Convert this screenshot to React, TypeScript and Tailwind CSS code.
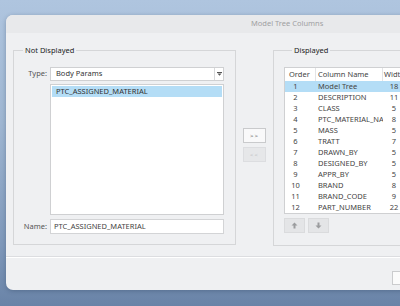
const rows: [string, string, string][] = [
  ["1", "Model Tree", "18"],
  ["2", "DESCRIPTION", "11"],
  ["3", "CLASS", "5"],
  ["4", "PTC_MATERIAL_NAME", "8"],
  ["5", "MASS", "5"],
  ["6", "TRATT", "7"],
  ["7", "DRAWN_BY", "5"],
  ["8", "DESIGNED_BY", "5"],
  ["9", "APPR_BY", "5"],
  ["10", "BRAND", "8"],
  ["11", "BRAND_CODE", "9"],
  ["12", "PART_NUMBER", "22"],
];

function ArrowUp() {
  return (
    <svg width="7" height="7" viewBox="0 0 7 7">
      <path d="M3.5 0.5 L6.5 3.5 L4.5 3.5 L4.5 6.5 L2.5 6.5 L2.5 3.5 L0.5 3.5 Z" fill="#9b9c9e" />
    </svg>
  );
}

function ArrowDown() {
  return (
    <svg width="7" height="7" viewBox="0 0 7 7">
      <path d="M3.5 6.5 L6.5 3.5 L4.5 3.5 L4.5 0.5 L2.5 0.5 L2.5 3.5 L0.5 3.5 Z" fill="#9b9c9e" />
    </svg>
  );
}

export default function App() {
  return (
    <div
      className="relative w-[400px] h-[306px] overflow-hidden bg-[linear-gradient(180deg,#afc5df_0%,#9fb6d2_40%,#7f98ba_80%,#6983a7_100%)]"
      style={{ fontFamily: '"Noto Sans", "Open Sans", Arial, sans-serif' }}
    >
      <div className="absolute left-[6px] top-[15px] w-[430px] h-[275px] rounded-l-[7px] bg-[#eff0f2] flex flex-col overflow-hidden shadow-[0_1px_4px_rgba(40,60,90,0.35)]">
        {/* title bar */}
        <div className="h-[18px] bg-[#e8e9eb] flex items-center pl-[245px] text-[7.5px] text-[#9fa0a2] leading-none">
          Model Tree Columns
        </div>

        {/* body */}
        <div className="flex pl-[7px] pt-[11px] pb-[10px] text-[7.5px] leading-none">
          {/* Not displayed */}
          <fieldset className="w-[223px] h-[201px] border border-[#d5d6d8] pr-[11px] pb-[10px]">
            <legend className="ml-[9px] px-[2px] h-[12px] leading-[12px] text-[#222]">Not Displayed</legend>
            <div className="mt-[11px] flex items-center h-[14px]">
              <div className="w-[34px] pr-[1px] text-right text-[#555]">Type:</div>
              <div className="ml-[2px] w-[174px] h-[14px] bg-white border border-[#cfd0d2] flex items-center">
                <div className="flex-1 pl-[5px] text-[#333]">Body Params</div>
                <div className="w-[9px] h-full border-l border-[#d8d9db] flex items-center justify-center">
                  <svg width="5" height="4" viewBox="0 0 5 4">
                    <rect x="0" y="0" width="5" height="1" fill="#555" />
                    <path d="M0.5 1.5 L4.5 1.5 L2.5 3.8 Z" fill="#555" />
                  </svg>
                </div>
              </div>
            </div>
            <div className="mt-[3px] ml-[36px] w-[174px] h-[131px] bg-white border border-[#cfd0d2] p-[1px]">
              <div className="h-[11px] bg-[#b4ddf6] flex items-center pl-[4px] text-[#333]">PTC_ASSIGNED_MATERIAL</div>
            </div>
            <div className="mt-[4px] flex items-center h-[15px]">
              <div className="w-[34px] pr-[1px] text-right text-[#555]">Name:</div>
              <div className="ml-[2px] w-[174px] h-[15px] bg-white border border-[#d3d4d6] flex items-center pl-[3px] text-[#444]">
                PTC_ASSIGNED_MATERIAL
              </div>
            </div>
          </fieldset>

          {/* middle buttons */}
          <div className="w-[37px] flex flex-col items-center pt-[84px] gap-[4px]">
            <div className="w-[23px] h-[15px] bg-[#f9f9fa] border border-[#c9cacc] flex items-center justify-center text-[6px] text-[#444] tracking-[1px]">
              &gt;&gt;
            </div>
            <div className="w-[23px] h-[15px] bg-[#e6e7e9] border border-[#dcdde0] flex items-center justify-center text-[6px] text-[#b9babc] tracking-[1px]">
              &lt;&lt;
            </div>
          </div>

          {/* Displayed */}
          <fieldset className="w-[160px] h-[202px] border border-[#d5d6d8] pl-[10px]">
            <legend className="ml-[8px] px-[2px] h-[12px] leading-[12px] text-[#222]">Displayed</legend>
            <div className="mt-[11px] w-[140px] h-[147px] bg-white border border-[#cfd0d2] text-[#444]">
              <div className="flex h-[13px] items-center">
                <div className="w-[31px] h-full flex items-center pl-[4px] border-r border-[#e3e4e6]">Order</div>
                <div className="w-[67px] h-full flex items-center pl-[2px] border-r border-[#e3e4e6]">Column Name</div>
                <div className="flex-1 h-full flex items-center pl-[1px]">Width</div>
              </div>
              {rows.map(([o, n, w], i) => (
                <div key={o} className={`flex h-[11px] items-center ${i === 0 ? "bg-[#b4ddf6]" : ""}`}>
                  <div className="w-[31px]">
                    <div className="w-[21px] text-center">{o}</div>
                  </div>
                  <div className="w-[67px] pl-[2px] overflow-hidden whitespace-nowrap">{n}</div>
                  <div className="w-[22px] text-center">{w}</div>
                </div>
              ))}
            </div>
            <div className="mt-[4px] flex gap-[3px]">
              <div className="w-[21px] h-[15px] bg-[#e4e5e7] border border-[#dadbdd] flex items-center justify-center">
                <ArrowUp />
              </div>
              <div className="w-[21px] h-[15px] bg-[#e4e5e7] border border-[#dadbdd] flex items-center justify-center">
                <ArrowDown />
              </div>
            </div>
          </fieldset>
        </div>

        {/* footer */}
        <div className="flex-1 border-t border-[#dcdde0] shadow-[inset_0_1px_0_#ffffff] pl-[386px] pt-[14px]">
          <div className="w-[60px] h-[14px] bg-[#fbfbfb] border border-[#cbccce]" />
        </div>
      </div>
    </div>
  );
}
